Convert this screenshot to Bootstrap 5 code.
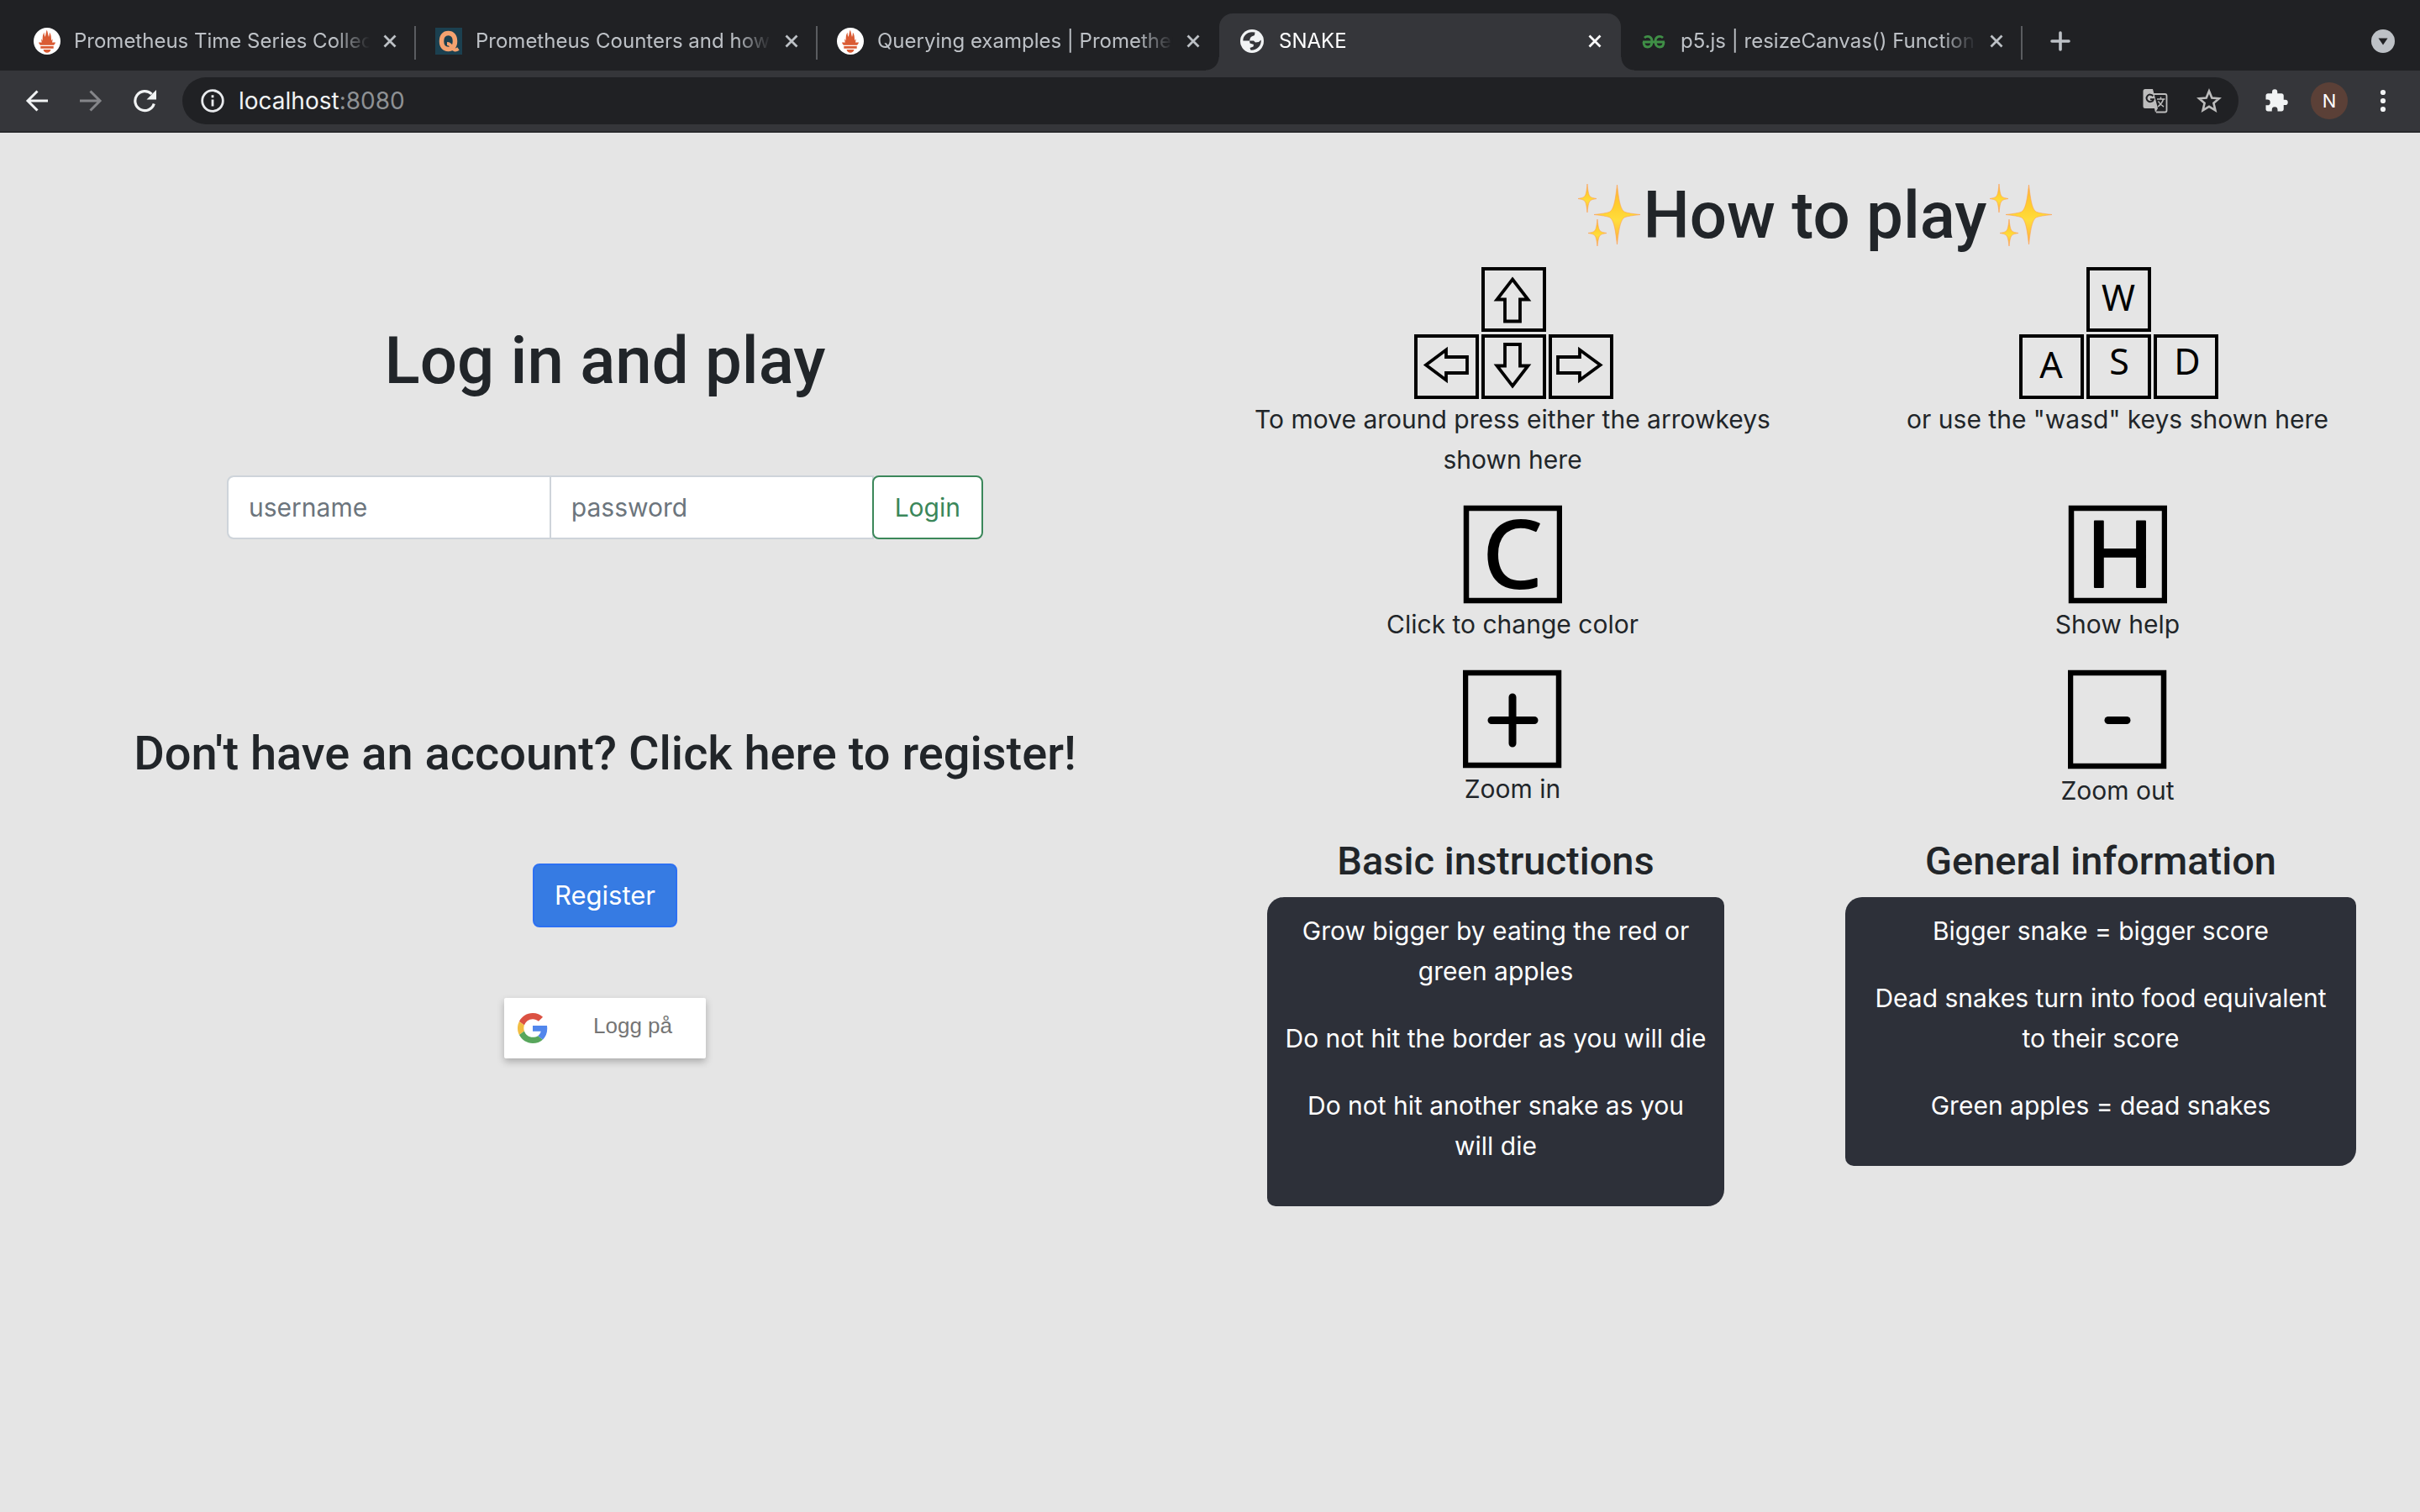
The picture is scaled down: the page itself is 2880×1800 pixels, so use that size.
<!DOCTYPE html>
<html lang="en">
<head>
<meta charset="utf-8">
<meta name="viewport" content="width=device-width, initial-scale=1">
<title>SNAKE</title>
<link href="https://cdn.jsdelivr.net/npm/bootstrap@5.3.0/dist/css/bootstrap.min.css" rel="stylesheet">
<style>
  html { font-size: 32px; }
  body {
    --bs-border-width: 2px;
    background: #e5e5e5;
    color: #212529;
    font-family: Inter, Roboto, "Liberation Sans", sans-serif;
    font-size: 30px;
    line-height: 48px;
    min-height: 100vh;
  }
  svg { display: block; flex: none; }

  /* browser tab strip */
  .tabstrip { background: #202124; height: 84px; padding: 16px 30px 0 17px; }
  .browser-tab {
    position: relative;
    flex: 0 1 478px;
    min-width: 0;
    height: 68px;
    padding: 0 23px 2px 23px;
    font-size: 24px;
    color: #bdc1c6;
  }
  .browser-tab.divided::after {
    content: "";
    position: absolute;
    right: 0;
    top: 15px;
    width: 2px;
    height: 40px;
    background: #5a5c60;
  }
  .browser-tab a {
    flex: 1 1 0;
    min-width: 0;
    margin: 0 16px;
    overflow: hidden;
    white-space: nowrap;
    color: inherit;
    text-decoration: none;
    -webkit-mask-image: linear-gradient(90deg, #000 88%, transparent);
    mask-image: linear-gradient(90deg, #000 88%, transparent);
  }
  .browser-tab.current {
    background: #35363a;
    color: #fff;
    border-radius: 16px 16px 0 0;
  }
  .browser-tab.current::before,
  .browser-tab.current::after {
    content: "";
    position: absolute;
    bottom: 0;
    width: 16px;
    height: 16px;
  }
  .browser-tab.current::before { left: -16px; background: radial-gradient(circle at 0 0, transparent 15px, #35363a 16px); }
  .browser-tab.current::after { right: -16px; background: radial-gradient(circle at 100% 0, transparent 15px, #35363a 16px); }
  .plain-btn { background: none; border: 0; padding: 0; color: inherit; flex: none; }
  .new-tab { margin-left: 33px; padding-bottom: 2px; }
  .tab-search { padding-bottom: 2px; }

  /* browser toolbar */
  .toolbar { background: #35363a; height: 74px; padding: 8px 24px 8px 30px; border-bottom: 2px solid #28292c; color: #f1f3f4; }
  .nav-icons { gap: 36px; margin-right: 29px; }
  .omnibox { background: #202124; border-radius: 28px; height: 56px; padding: 0 20px 0 21px; font-size: 28px; }
  .address { margin-left: 16px; line-height: 56px; outline: 0; }
  .address span { color: #8e9194; }
  .omnibox-icons { gap: 34px; color: #bdbdbd; }
  .avatar { width: 44px; height: 44px; border-radius: 50%; background: #5b4037; color: #fff; font-size: 22px; line-height: 44px; }
  .toolbar-end { gap: 26px; margin-left: 30px; }

  /* page */
  h1, h2, h3 { font-family: Roboto, Inter, sans-serif; font-weight: 500; }
  h1 { font-size: 78px; line-height: 96px; }
  h2 { font-size: 56px; line-height: 67px; }
  h3 { font-size: 47px; line-height: 57px; }
  .login-side { padding-top: 224px; }
  .login-form { width: 62.5%; margin-top: 88px; margin-bottom: 222px; }
  .login-form .form-control, .login-form .btn { font-size: 30px; line-height: 48px; padding: 12px 24px; }
  .login-form .form-control { border-color: #ced4da; }
  .login-form .form-control::placeholder { color: #6c757d; opacity: 1; }
  .login-form .btn, .register-btn { border-radius: 8px !important; }
  .login-form .btn { padding: 12px 25px; }
  .login-form .form-control:first-child { border-radius: 8px 0 0 8px; }
  .login-btn { --bs-btn-color: #3b875a; --bs-btn-border-color: #3b875a; --bs-btn-bg: #fff; }
  .register-btn {
    --bs-btn-bg: #367be3;
    --bs-btn-border-color: #2c70f2;
    font-size: 31px;
    line-height: 48px;
    padding: 12px 24px;
    margin: 97px 0 84px;
  }
  .google-btn {
    width: 240px;
    height: 72px;
    padding: 0 16px;
    border: 0;
    border-radius: 2px;
    background: #fff;
    color: #757575;
    box-shadow: 0 4px 8px rgba(0, 0, 0, .25);
    font-family: "Liberation Sans", Arial, sans-serif;
    font-size: 26px;
  }
  .google-btn span { padding: 0 24px 6px 0; }

  .help-side { padding-top: 51px; }
  .help-side h1 { margin-bottom: 13px; }
  .help-side p { margin-bottom: 30px; }
  .key-art { stroke: #000; fill: none; }
  .key-art text { font-family: "Noto Sans", "Open Sans", sans-serif; fill: #000; stroke: none; text-anchor: middle; }
  .key-art .big-letter { stroke: #000; stroke-width: 2px; stroke-linejoin: round; }
  .info-row { padding: 0 76px 0 68px; }
  .info-row h3 { padding-top: 1px; margin-bottom: 15px; }
  .info-card {
    background: #2d3039;
    color: #fff;
    border-radius: 20px 10px;
    padding: 16px 21px;
  }
  .info-card p { margin-bottom: 32px; }
  .basic-info { width: 544px; }
  .general-info { width: 608px; }
  .glyph-defs { width: 0; height: 0; position: absolute; }
</style>
<script src="https://cdn.jsdelivr.net/npm/bootstrap@5.3.0/dist/js/bootstrap.bundle.min.js"></script>
</head>
<body>

<svg class="glyph-defs" aria-hidden="true">
  <defs>
    <linearGradient id="gold" x1="0" y1="0" x2="0" y2="1">
      <stop offset="0" stop-color="#ffb43a"/><stop offset=".35" stop-color="#ffce2e"/>
      <stop offset=".6" stop-color="#ffdd3c"/><stop offset="1" stop-color="#ffab3f"/>
    </linearGradient>
  </defs>
  <symbol id="torch" viewBox="0 0 32 32">
    <circle cx="16" cy="16" r="16" fill="#fff"/>
    <path fill="#da5b34" d="M15.800 2.500C17 5.500 17 8 18 11c.8-2 1-3.500.8-5.500C21.500 9 20.600 12.500 21.300 15.500c.4-1 .7-1.700.9-2.500.6 2 .2 3.500-.6 5.500H10.200C9.300 16.500 9 15 9.500 13c.2 1 .5 1.700 1 2.400C11 12 10.200 9 12.700 5.500c-.3 2 .2 3.500 1 5.500C14.600 8 14.500 5.500 15.800 2.500ZM6 17.500h20c-.4 1.400-1 2.400-2 3.300H8c-1-.9-1.600-1.900-2-3.300ZM8.300 22h15.400v2.800H8.300ZM11.500 26h9c-.4 2.300-2.300 3.800-4.500 3.800S11.900 28.300 11.500 26Z"/>
  </symbol>
  <symbol id="close" viewBox="0 0 16 16">
    <path d="M1.500 1.500l13 13M14.500 1.500l-13 13" stroke="currentColor" stroke-width="2.800" fill="none"/>
  </symbol>
  <symbol id="sparkles" viewBox="0 0 82 82">
    <g fill="url(#gold)" stroke="#ff9f50" stroke-width=".6">
      <path d="M50.500 4C53 26 55 34 60 36.500Q64 38 78 39.500Q64 41 60 42.500C55 45 53 53 50.500 75C48 53 46 45 41 42.500Q37 41 23 39.500Q37 38 41 36.500C46 34 48 26 50.500 4Z"/>
      <path d="M15 3C16 14 17 17 19 18.500Q20 19.500 26 20.500Q20 21.500 19 22.500C17 24 16 27 15 37C14 27 13 24 11 22.500Q10 21.500 4 20.500Q10 19.500 11 18.500C13 17 14 14 15 3Z"/>
      <path d="M27 45C28 55 29 58 31 59.500Q32 60.500 38 61.500Q32 62.500 31 63.500C29 65 28 68 27 77C26 68 25 65 23 63.500Q22 62.500 16 61.500Q22 60.500 23 59.500C25 58 26 55 27 45Z"/>
    </g>
  </symbol>
</svg>

<header>
  <nav class="tabstrip d-flex align-items-center" aria-label="Tabs">
    <div class="browser-tab divided d-flex align-items-center">
      <svg width="32" height="32"><use href="#torch"/></svg>
      <a href="#">Prometheus Time Series Collec</a>
      <button class="plain-btn" aria-label="Close tab"><svg width="16" height="16"><use href="#close"/></svg></button>
    </div>
    <div class="browser-tab divided d-flex align-items-center">
      <svg width="32" height="32" viewBox="0 0 32 32">
        <rect width="32" height="32" fill="#1b4050"/>
        <path fill="none" stroke="#f5a26f" stroke-width="5.500" d="M15.500 6.500c5 0 8 3.500 8 9.500s-3 9.500-8 9.500-8-3.500-8-9.500 3-9.500 8-9.500Z"/>
        <path fill="none" stroke="#f5a26f" stroke-width="4" d="M14 19c3 0 4.500 1.500 6 4.500s4 4 7.500 1.500"/>
      </svg>
      <a href="#">Prometheus Counters and how</a>
      <button class="plain-btn" aria-label="Close tab"><svg width="16" height="16"><use href="#close"/></svg></button>
    </div>
    <div class="browser-tab d-flex align-items-center">
      <svg width="32" height="32"><use href="#torch"/></svg>
      <a href="#">Querying examples | Prometheu</a>
      <button class="plain-btn" aria-label="Close tab"><svg width="16" height="16"><use href="#close"/></svg></button>
    </div>
    <div class="browser-tab current d-flex align-items-center">
      <svg width="32" height="32" viewBox="0 0 32 32">
        <circle cx="16" cy="16" r="14" fill="#f1f3f4"/>
        <path fill="#35363a" d="M5.300 15.500C5.500 9.500 10 5.500 16 5.300L19.500 5.500 19 9 15.500 10.500 14 12 13 15.500ZM13 15.500H18L20 17.500 24 17 26.700 14.500C27.500 21 22 27 14.500 26.700L13.500 24 17.500 22.500 18 20 13.500 18.500Z"/>
      </svg>
      <a href="#">SNAKE</a>
      <button class="plain-btn" aria-label="Close tab"><svg width="16" height="16"><use href="#close"/></svg></button>
    </div>
    <div class="browser-tab divided d-flex align-items-center">
      <svg width="32" height="32" viewBox="0 0 32 32" fill="none" stroke="#3f8f46" stroke-width="2.800">
        <path d="M3 17h26M5 12c3-3 9-2 9 4 0 5-2 7-5 7s-5-2-5-6M27 12c-3-3-9-2-9 4 0 5 2 7 5 7s5-2 5-6"/>
      </svg>
      <a href="#">p5.js | resizeCanvas() Function</a>
      <button class="plain-btn" aria-label="Close tab"><svg width="16" height="16"><use href="#close"/></svg></button>
    </div>
    <button class="plain-btn new-tab" aria-label="New tab">
      <svg width="24" height="24" viewBox="0 0 24 24" stroke="#bdc1c6" stroke-width="3.600" stroke-linecap="round"><path d="M12 2v20M2 12h20"/></svg>
    </button>
    <button class="plain-btn tab-search ms-auto" aria-label="Search tabs">
      <svg width="28" height="28" viewBox="0 0 28 28"><circle cx="14" cy="14" r="14" fill="#bdc1c6"/><path d="M8.500 10.500h11L14 18.500Z" fill="#202124"/></svg>
    </button>
  </nav>

  <div class="toolbar d-flex align-items-center">
    <div class="nav-icons d-flex align-items-center">
      <button class="plain-btn" aria-label="Back"><svg width="28" height="28" viewBox="0 0 28 28" fill="none" stroke="#f1f3f4" stroke-width="3"><path d="M27 14H3.500M14.500 2.500L3 14l11.500 11.500"/></svg></button>
      <button class="plain-btn" aria-label="Forward"><svg width="28" height="28" viewBox="0 0 28 28" fill="none" stroke="#85868a" stroke-width="3"><path d="M1 14h23.500M13.500 2.500L25 14 13.500 25.500"/></svg></button>
      <button class="plain-btn" aria-label="Reload"><svg width="30" height="28" viewBox="0 0 30 28"><path d="M25.300 17.500A11.500 11.500 0 1 1 22.500 6" fill="none" stroke="#f1f3f4" stroke-width="3.200"/><path d="M28 1v11.500H16.500Z" fill="#f1f3f4"/></svg></button>
    </div>
    <div class="omnibox d-flex align-items-center flex-grow-1">
      <svg width="30" height="30" viewBox="0 0 30 30" fill="none" stroke="#e8eaed" stroke-width="2.800"><circle cx="15" cy="15" r="12.300"/><path d="M15 13.500v8M15 8.300v3"/></svg>
      <div class="address flex-grow-1" contenteditable="true" role="textbox" aria-label="Address">localhost<span>:8080</span></div>
      <div class="omnibox-icons d-flex align-items-center">
        <button class="plain-btn" aria-label="Translate page">
          <svg width="30" height="30" viewBox="0 0 30 30">
            <path d="M12 7h14.500a2 2 0 0 1 2 2v17.500a2 2 0 0 1-2 2H16" fill="none" stroke="currentColor" stroke-width="1.800"/>
            <path d="M3 1h9l6 23H3a2.500 2.500 0 0 1-2.500-2.500v-18A2.500 2.500 0 0 1 3 1Z" fill="currentColor"/>
            <path d="M12.300 9.300A4.300 4.300 0 1 0 13 13.200H9" fill="none" stroke="#202124" stroke-width="2"/>
            <path d="M17 13h9.500M21.500 10.500V13M24.500 13c-1 4-3 6.500-6.500 9M18.500 15.500c1.500 3 4 5 6.500 6.500" fill="none" stroke="currentColor" stroke-width="1.500"/>
            <path d="M14 24h4l-3 5Z" fill="currentColor"/>
          </svg>
        </button>
        <button class="plain-btn" aria-label="Bookmark">
          <svg width="30" height="30" viewBox="0 0 30 30"><path d="M15 3.500l3.300 8 8.700.7-6.600 5.600 2 8.500L15 21.800l-7.400 4.500 2-8.500L3 12.200l8.700-.7Z" fill="none" stroke="currentColor" stroke-width="2.600"/></svg>
        </button>
      </div>
    </div>
    <div class="toolbar-end d-flex align-items-center">
      <button class="plain-btn" aria-label="Extensions"><svg width="30" height="30" viewBox="0 0 24 24"><path fill="#f1f3f4" d="M20.500 11H19V7c0-1.100-.9-2-2-2h-4V3.500a2.500 2.500 0 0 0-5 0V5H4c-1.100 0-2 .9-2 2v3.800h1.500a2.700 2.700 0 0 1 0 5.400H2V20c0 1.100.9 2 2 2h3.800v-1.500a2.700 2.700 0 0 1 5.400 0V22H17c1.100 0 2-.9 2-2v-4h1.500a2.500 2.500 0 0 0 0-5Z"/></svg></button>
      <button class="plain-btn avatar text-center" aria-label="Profile">N</button>
      <button class="plain-btn" aria-label="Menu"><svg width="36" height="28" viewBox="0 0 36 28" fill="#f1f3f4"><circle cx="16" cy="4" r="3.100"/><circle cx="16" cy="14" r="3.100"/><circle cx="16" cy="24" r="3.100"/></svg></button>
    </div>
  </div>
</header>

<main class="row g-0 text-center">
  <section class="col-6 login-side d-flex flex-column align-items-center">
    <h1 class="mb-0">Log in and play</h1>
    <form class="login-form input-group">
      <input type="text" class="form-control" placeholder="username" aria-label="username">
      <input type="password" class="form-control" placeholder="password" aria-label="password">
      <button type="button" class="btn btn-outline-success login-btn">Login</button>
    </form>
    <h2 class="mb-0">Don't have an account? Click here to register!</h2>
    <button type="button" class="btn btn-primary register-btn">Register</button>
    <button type="button" class="google-btn d-flex align-items-center justify-content-between">
      <svg width="36" height="36" viewBox="0 0 48 48">
        <path fill="#db5142" d="M24 9.500c3.540 0 6.710 1.220 9.210 3.600l6.850-6.850C35.900 2.380 30.470 0 24 0 14.620 0 6.510 5.380 2.560 13.220l7.980 6.190C12.430 13.720 17.740 9.500 24 9.500z"/>
        <path fill="#5186ec" d="M46.980 24.550c0-1.570-.15-3.090-.38-4.550H24v9.020h12.940c-.58 2.960-2.260 5.480-4.780 7.180l7.730 6c4.510-4.180 7.090-10.360 7.090-17.650z"/>
        <path fill="#f2bd42" d="M10.530 28.590c-.48-1.450-.76-2.990-.76-4.590s.27-3.140.76-4.590l-7.980-6.190C.92 16.460 0 20.120 0 24c0 3.880.92 7.540 2.560 10.780l7.970-6.190z"/>
        <path fill="#58a65c" d="M24 48c6.480 0 11.930-2.130 15.890-5.810l-7.730-6c-2.150 1.450-4.920 2.300-8.160 2.300-6.260 0-11.570-4.220-13.470-9.910l-7.980 6.190C6.510 42.620 14.620 48 24 48z"/>
      </svg>
      <span>Logg på</span>
    </button>
  </section>

  <section class="col-6 help-side">
    <h1 class="d-flex align-items-center justify-content-center">
      <svg width="82" height="82" role="img" aria-label="sparkles"><use href="#sparkles"/></svg>How to play<svg width="82" height="82" role="img" aria-label="sparkles"><use href="#sparkles"/></svg>
    </h1>

    <div class="row g-0">
      <div class="col-6 px-4">
        <svg class="key-art mx-auto" width="240" height="157" viewBox="0 0 240 157" stroke-width="4">
          <path d="M85 2h73v73H85ZM5 82h73v73H5ZM85 82h73v73H85ZM165 82h73v73h-73Z"/>
          <path stroke-width="3.800" d="M120 14.500L138.500 38.500H129V64.500H111V38.500H101.500ZM120 141.500L138.500 117.500H129V92H111V117.500H101.500ZM17 116.500L41 98.500V107H66V126H41V134.500ZM224.500 116.500L200 98.500V107H174V126H200V134.500Z"/>
        </svg>
        <p>To move around press either the arrowkeys shown here</p>
      </div>
      <div class="col-6 px-4">
        <svg class="key-art mx-auto" width="240" height="157" viewBox="0 0 240 157" stroke-width="4" font-size="43">
          <path d="M85 2h73v73H85ZM5 82h73v73H5ZM85 82h73v73H85ZM165 82h73v73h-73Z"/>
          <text x="121" y="52">W</text><text x="41" y="132">A</text><text x="122" y="128">S</text><text x="203" y="128">D</text>
        </svg>
        <p>or use the "wasd" keys shown here</p>
      </div>
    </div>

    <div class="row g-0">
      <div class="col-6 px-4">
        <svg class="key-art mx-auto" width="118" height="118" viewBox="0 0 118 118" stroke-width="6.500" font-size="112">
          <rect x="4" y="4" width="111" height="110"/>
          <text class="big-letter" x="59" y="99">C</text>
        </svg>
        <p>Click to change color</p>
      </div>
      <div class="col-6 px-4">
        <svg class="key-art mx-auto" width="118" height="118" viewBox="0 0 118 118" stroke-width="6.500" font-size="110">
          <rect x="4" y="4" width="111" height="110"/>
          <text class="big-letter" x="62" y="98">H</text>
        </svg>
        <p>Show help</p>
      </div>
    </div>

    <div class="row g-0">
      <div class="col-6 px-4">
        <svg class="key-art mx-auto" width="118" height="118" viewBox="0 0 118 118" stroke-width="6.500">
          <rect x="3" y="4" width="111" height="110"/>
          <path d="M34 60.500h51M59 33v55" stroke-width="9" stroke-linecap="round"/>
        </svg>
        <p>Zoom in</p>
      </div>
      <div class="col-6 px-4">
        <svg class="key-art mx-auto" width="118" height="120" viewBox="0 0 118 120" stroke-width="6.500">
          <rect x="3" y="4" width="111" height="111"/>
          <path d="M48 60.500h22" stroke-width="9" stroke-linecap="round"/>
        </svg>
        <p>Zoom out</p>
      </div>
    </div>

    <div class="info-row d-flex justify-content-between align-items-start">
      <div class="basic-info">
        <h3>Basic instructions</h3>
        <div class="info-card">
          <p>Grow bigger by eating the red or green apples</p>
          <p>Do not hit the border as you will die</p>
          <p>Do not hit another snake as you will&nbsp;die</p>
        </div>
      </div>
      <div class="general-info">
        <h3>General information</h3>
        <div class="info-card">
          <p>Bigger snake = bigger score</p>
          <p>Dead snakes turn into food equivalent to their score</p>
          <p>Green apples = dead snakes</p>
        </div>
      </div>
    </div>
  </section>
</main>
</body>
</html>
